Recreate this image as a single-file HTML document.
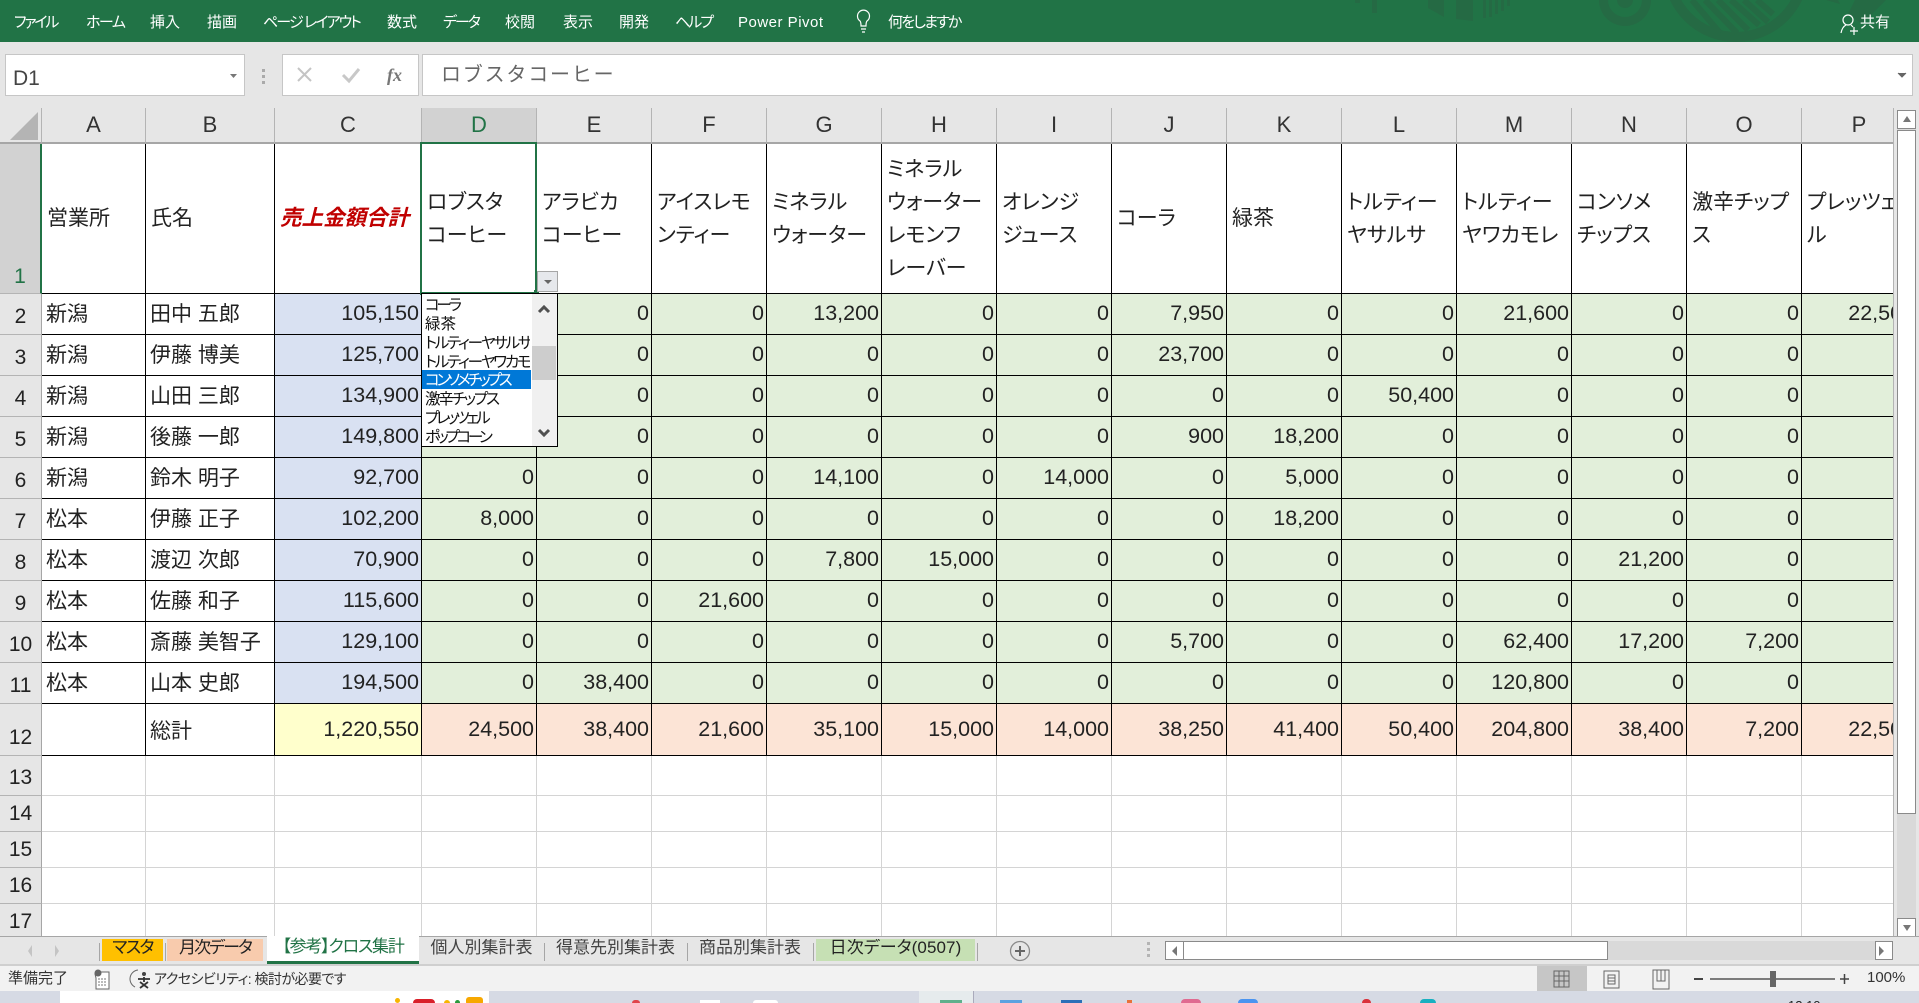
<!DOCTYPE html>
<html lang="ja"><head><meta charset="utf-8"><title>Excel</title>
<style>
html,body{margin:0;padding:0;width:1919px;height:1003px;overflow:hidden;background:#e6e6e6}
body{position:relative;font-family:"Liberation Sans","Noto Sans CJK JP",sans-serif;font-feature-settings:"palt";color:#111}
.a{position:absolute;white-space:nowrap}
#rib{position:absolute;left:0;top:0;width:1919px;height:42px;background:#217346;overflow:hidden}
#rib .l{position:absolute;top:13px;font-size:15px;line-height:20px;color:#fff;white-space:nowrap}
.box{position:absolute;background:#fff;border:1px solid #c6c6c6;box-sizing:border-box}
#sheet{position:absolute;left:0;top:108px;width:1893px;height:828px;overflow:hidden;background:#fff}
table{border-collapse:separate;border-spacing:0;table-layout:fixed;width:1917px}
td,th{box-sizing:border-box;padding:0;overflow:hidden;white-space:nowrap;font-weight:normal}
th{background:#e6e6e6;color:#222;font-size:21px}
tr.h th{border-right:1px solid #b4b4b4;border-bottom:2px solid #a6a6a6;font-size:22px;text-align:center;height:36px;color:#333;padding-top:0}
tr.h th.on{background:#d2d2d2;color:#217346}
th.n{border-right:1px solid #a6a6a6;border-bottom:1px solid #b4b4b4;text-align:center;vertical-align:bottom;line-height:30px;padding-bottom:2px}
td{font-size:21.5px;border-right:1px solid #000;border-bottom:1px solid #000;text-align:right;padding:0 2px 2px 0;background:#e2efda;color:#222}
td.t{background:#fff;text-align:left;padding:0 0 2px 4px;font-size:21px}
td.c{background:#d9e1f2}
td.y{background:#ffffcc;padding-bottom:0}
td.p{background:#fce4d6;padding-bottom:0}
td.t.z{padding-bottom:0}
tr.w td{background:#fff;text-align:left;padding:0 0 0 5px;font-size:21px;line-height:33px}
tr.e td{background:#fff;border-right:1px solid #d4d4d4;border-bottom:1px solid #d4d4d4}
.tab{position:absolute;top:939px;height:22px;line-height:18px;font-size:17px;text-align:center;color:#222;white-space:nowrap;overflow:hidden}
.sep{position:absolute;top:943px;width:1px;height:18px;background:#a6a6a6}
.dd{position:absolute;left:425px;width:105px;height:19px;line-height:19px;font-size:15.5px;color:#111;overflow:hidden;white-space:nowrap}
</style></head><body>

<div id="rib">
<svg width="1919" height="42" style="position:absolute;left:0;top:0" fill="#26694a">
<g fill="#256a44">
<rect x="1372" y="0" width="5" height="13"/><rect x="1355" y="0" width="5" height="3"/>
<path d="M1428 0h16v17l-16-9z"/><path d="M1456 0h17v21l-17-2z"/>
<rect x="1483" y="0" width="3" height="18"/><rect x="1489" y="0" width="3" height="17"/><rect x="1495" y="0" width="3" height="14"/><rect x="1501" y="0" width="3" height="11"/><rect x="1507" y="0" width="3" height="6"/>
<circle cx="1625" cy="0" r="26"/>
<circle cx="1736" cy="-31" r="73"/>
<path d="M1826 0h12l2 4zM1855 0h31l-24 24-14-10z"/>
</g>
<circle cx="1625" cy="0" r="17" fill="#217346"/><circle cx="1625" cy="0" r="8" fill="#256a44"/>
<circle cx="1736" cy="-31" r="63" fill="#217346"/>
<g stroke="#256a44" stroke-width="6" fill="none"><path d="M1692 0l28 33M1705 0l32 33M1718 0l30 30M1731 0l28 25M1744 0l24 22M1757 0l16 14"/></g>
<circle cx="1848" cy="20" r="5" fill="none" stroke="#fff" stroke-width="1.2"/>
<path d="M1841 33c1-5 3-7 5-8M1851 25l2 2M1854 27v8M1850 31h8" stroke="#fff" stroke-width="1.2" fill="none"/>
<path d="M860 21a6 6 0 1 1 7 0c-1 1-1 3-1 5h-5c0-2 0-4-1-5zM861 29h5M862 32h3" stroke="#fff" stroke-width="1.2" fill="none"/>
</svg>
<span class="l" style="left:14px;letter-spacing:-2.2px">ファイル</span>
<span class="l" style="left:86px;letter-spacing:-1.5px">ホーム</span>
<span class="l" style="left:150px">挿入</span>
<span class="l" style="left:207px">描画</span>
<span class="l" style="left:263px;letter-spacing:-1.9px">ページ レイアウト</span>
<span class="l" style="left:387px">数式</span>
<span class="l" style="left:443px;letter-spacing:-2px">データ</span>
<span class="l" style="left:505px">校閲</span>
<span class="l" style="left:563px">表示</span>
<span class="l" style="left:619px">開発</span>
<span class="l" style="left:675px;letter-spacing:-2px">ヘルプ</span>
<span class="l" style="left:738px;letter-spacing:.5px">Power Pivot</span>
<span class="l" style="left:888px;letter-spacing:-1.8px">何をしますか</span>
<span class="l" style="left:1860px">共有</span>
</div>

<div class="box" style="left:5px;top:54px;width:240px;height:42px"></div>
<div class="a" style="left:13px;top:65px;font-size:21px;line-height:28px;color:#444">D1</div>
<svg class="a" style="left:0;top:42px" width="440" height="66">
<path d="M230 32h7l-3.500 4z" fill="#777"/>
<rect x="262" y="27" width="3" height="3" fill="#aaa"/><rect x="262" y="33" width="3" height="3" fill="#aaa"/><rect x="262" y="39" width="3" height="3" fill="#aaa"/>
</svg>
<div class="box" style="left:282px;top:54px;width:137px;height:42px"></div>
<svg class="a" style="left:282px;top:54px" width="137" height="42">
<path d="M16 14l13 13M29 14l-13 13" stroke="#c4c4c4" stroke-width="2" fill="none"/>
<path d="M61 21l6 6 10-12" stroke="#c8c8c8" stroke-width="3" fill="none"/>
<text x="105" y="27" font-family="Liberation Serif" font-style="italic" font-weight="bold" font-size="18" fill="#777">fx</text>
</svg>
<div class="box" style="left:422px;top:54px;width:1491px;height:42px"></div>
<div class="a" style="left:441px;top:61px;font-size:20px;line-height:28px;color:#666;letter-spacing:1.8px;font-feature-settings:normal">ロブスタコーヒー</div>
<svg class="a" style="left:1896px;top:70px" width="12" height="10"><path d="M2 3l4 4 4-4" fill="#666" stroke="#666"/></svg>

<div id="sheet">
<table>
<colgroup><col style="width:42px"><col style="width:104px"><col style="width:129px"><col style="width:147px"><col span="13" style="width:115px"></colgroup>
<tr class="h"><th style="background:#e6e6e6;border-right:1px solid #b4b4b4"></th><th>A</th><th>B</th><th>C</th><th class="on">D</th><th>E</th><th>F</th><th>G</th><th>H</th><th>I</th><th>J</th><th>K</th><th>L</th><th>M</th><th>N</th><th>O</th><th>P</th></tr>
<tr class="w" style="height:150px"><th class="n" style="background:#d2d2d2;color:#217346;border-right:2px solid #217346;padding-bottom:1px">1</th>
<td style="font-size:21px;line-height:30px">営業所</td><td style="font-size:21px;line-height:30px">氏名</td>
<td style="color:#c00000;font-weight:bold;font-style:italic;font-size:21.500px">売上金額合計</td>
<td>ロブスタ<br>コーヒー</td><td>アラビカ<br>コーヒー</td><td>アイスレモ<br>ンティー</td><td>ミネラル<br>ウォーター</td><td>ミネラル<br>ウォーター<br>レモンフ<br>レーバー</td><td>オレンジ<br>ジュース</td><td>コーラ</td><td>緑茶</td><td>トルティー<br>ヤサルサ</td><td>トルティー<br>ヤワカモレ</td><td>コンソメ<br>チップス</td><td>激辛チップ<br>ス</td><td>プレッツェ<br>ル</td></tr>
<tr style="height:41px"><th class="n">2</th><td class="t">新潟</td><td class="t">田中 五郎</td><td class="c">105,150</td><td>2,400</td><td>0</td><td>0</td><td>13,200</td><td>0</td><td>0</td><td>7,950</td><td>0</td><td>0</td><td>21,600</td><td>0</td><td>0</td><td>22,500</td></tr>
<tr style="height:41px"><th class="n">3</th><td class="t">新潟</td><td class="t">伊藤 博美</td><td class="c">125,700</td><td>0</td><td>0</td><td>0</td><td>0</td><td>0</td><td>0</td><td>23,700</td><td>0</td><td>0</td><td>0</td><td>0</td><td>0</td><td>0</td></tr>
<tr style="height:41px"><th class="n">4</th><td class="t">新潟</td><td class="t">山田 三郎</td><td class="c">134,900</td><td>0</td><td>0</td><td>0</td><td>0</td><td>0</td><td>0</td><td>0</td><td>0</td><td>50,400</td><td>0</td><td>0</td><td>0</td><td>0</td></tr>
<tr style="height:41px"><th class="n">5</th><td class="t">新潟</td><td class="t">後藤 一郎</td><td class="c">149,800</td><td>0</td><td>0</td><td>0</td><td>0</td><td>0</td><td>0</td><td>900</td><td>18,200</td><td>0</td><td>0</td><td>0</td><td>0</td><td>0</td></tr>
<tr style="height:41px"><th class="n">6</th><td class="t">新潟</td><td class="t">鈴木 明子</td><td class="c">92,700</td><td>0</td><td>0</td><td>0</td><td>14,100</td><td>0</td><td>14,000</td><td>0</td><td>5,000</td><td>0</td><td>0</td><td>0</td><td>0</td><td>0</td></tr>
<tr style="height:41px"><th class="n">7</th><td class="t">松本</td><td class="t">伊藤 正子</td><td class="c">102,200</td><td>8,000</td><td>0</td><td>0</td><td>0</td><td>0</td><td>0</td><td>0</td><td>18,200</td><td>0</td><td>0</td><td>0</td><td>0</td><td>0</td></tr>
<tr style="height:41px"><th class="n">8</th><td class="t">松本</td><td class="t">渡辺 次郎</td><td class="c">70,900</td><td>0</td><td>0</td><td>0</td><td>7,800</td><td>15,000</td><td>0</td><td>0</td><td>0</td><td>0</td><td>0</td><td>21,200</td><td>0</td><td>0</td></tr>
<tr style="height:41px"><th class="n">9</th><td class="t">松本</td><td class="t">佐藤 和子</td><td class="c">115,600</td><td>0</td><td>0</td><td>21,600</td><td>0</td><td>0</td><td>0</td><td>0</td><td>0</td><td>0</td><td>0</td><td>0</td><td>0</td><td>0</td></tr>
<tr style="height:41px"><th class="n">10</th><td class="t">松本</td><td class="t">斎藤 美智子</td><td class="c">129,100</td><td>0</td><td>0</td><td>0</td><td>0</td><td>0</td><td>0</td><td>5,700</td><td>0</td><td>0</td><td>62,400</td><td>17,200</td><td>7,200</td><td>0</td></tr>
<tr style="height:41px"><th class="n">11</th><td class="t">松本</td><td class="t">山本 史郎</td><td class="c">194,500</td><td>0</td><td>38,400</td><td>0</td><td>0</td><td>0</td><td>0</td><td>0</td><td>0</td><td>0</td><td>120,800</td><td>0</td><td>0</td><td>0</td></tr>
<tr style="height:52px"><th class="n">12</th><td class="t z"></td><td class="t z">総計</td><td class="y">1,220,550</td><td class="p">24,500</td><td class="p">38,400</td><td class="p">21,600</td><td class="p">35,100</td><td class="p">15,000</td><td class="p">14,000</td><td class="p">38,250</td><td class="p">41,400</td><td class="p">50,400</td><td class="p">204,800</td><td class="p">38,400</td><td class="p">7,200</td><td class="p">22,500</td></tr>
<tr class="e" style="height:40px"><th class="n">13</th><td></td><td></td><td></td><td></td><td></td><td></td><td></td><td></td><td></td><td></td><td></td><td></td><td></td><td></td><td></td><td></td></tr>
<tr class="e" style="height:36px"><th class="n">14</th><td></td><td></td><td></td><td></td><td></td><td></td><td></td><td></td><td></td><td></td><td></td><td></td><td></td><td></td><td></td><td></td></tr>
<tr class="e" style="height:36px"><th class="n">15</th><td></td><td></td><td></td><td></td><td></td><td></td><td></td><td></td><td></td><td></td><td></td><td></td><td></td><td></td><td></td><td></td></tr>
<tr class="e" style="height:36px"><th class="n">16</th><td></td><td></td><td></td><td></td><td></td><td></td><td></td><td></td><td></td><td></td><td></td><td></td><td></td><td></td><td></td><td></td></tr>
<tr class="e" style="height:36px"><th class="n">17</th><td></td><td></td><td></td><td></td><td></td><td></td><td></td><td></td><td></td><td></td><td></td><td></td><td></td><td></td><td></td><td></td></tr>
</table>
</div>
<svg class="a" style="left:0;top:108px" width="41" height="35"><path d="M38 4v28H10z" fill="#b4b4b4"/></svg>
<div class="a" style="left:1893px;top:108px;width:1px;height:828px;background:#b4b4b4"></div>

<!-- selection -->
<div class="a" style="left:420px;top:142px;width:113px;height:148px;border:2px solid #217346;border-bottom-width:3px"></div>
<div class="a" style="left:534px;top:290px;width:5px;height:5px;background:#217346"></div>
<div class="a" style="left:537px;top:271px;width:21px;height:21px;box-sizing:border-box;border:1px solid #a6a6a6;background:#e6e8ec"></div>
<svg class="a" style="left:537px;top:271px" width="21" height="21"><path d="M7 9h8l-4 4z" fill="#666"/></svg>

<!-- dropdown -->
<div class="a" style="left:421px;top:293px;width:137px;height:154px;background:#fff;border:1px solid #000;box-sizing:border-box"></div>
<div class="a" style="left:532px;top:294px;width:25px;height:152px;background:#f0f0f0"></div>
<div class="a" style="left:532px;top:346px;width:24px;height:34px;background:#cdcdcd"></div>
<svg class="a" style="left:532px;top:294px" width="25" height="152"><path d="M7 18l5-5 5 5M7 136l5 5 5-5" stroke="#505050" stroke-width="3" fill="none"/></svg>
<div class="a" style="left:422px;top:370px;width:109px;height:19px;background:#0078d7"></div>
<div class="dd" style="top:296px;letter-spacing:-3.200px">コーラ</div>
<div class="dd" style="top:315px">緑茶</div>
<div class="dd" style="top:334px;letter-spacing:-2.200px">トルティーヤサルサ</div>
<div class="dd" style="top:353px;letter-spacing:-2.200px">トルティーヤワカモレ</div>
<div class="dd" style="top:371px;color:#fff;letter-spacing:-3.100px">コンソメチップス</div>
<div class="dd" style="top:390px;letter-spacing:-2.100px">激辛チップス</div>
<div class="dd" style="top:409px;letter-spacing:-3.200px">プレッツェル</div>
<div class="dd" style="top:428px;letter-spacing:-3.300px">ポップコーン</div>

<!-- v scrollbar -->
<div class="a" style="left:1897px;top:110px;width:19px;height:826px;background:#d9d9d9"></div>
<div class="box" style="left:1897px;top:110px;width:19px;height:19px;border-color:#8a8a8a"></div>
<div class="box" style="left:1897px;top:130px;width:19px;height:684px;border-color:#8a8a8a"></div>
<div class="box" style="left:1897px;top:918px;width:19px;height:19px;border-color:#8a8a8a"></div>
<svg class="a" style="left:1897px;top:110px" width="19" height="827"><path d="M6 12h8l-4-6zM6 815h8l-4 6z" fill="#777"/></svg>

<!-- tabs -->
<div class="a" style="left:0;top:936px;width:1919px;height:28px;background:#e6e6e6;border-top:1px solid #a6a6a6;box-sizing:border-box"></div>
<svg class="a" style="left:20px;top:944px" width="50" height="14"><path d="M12 1l-4 6 4 6zM35 1l4 6-4 6z" fill="#c4c4c4"/></svg>
<div class="sep" style="left:99px"></div>
<div class="tab" style="left:102px;width:61px;background:#ffc000;letter-spacing:-1.600px">マスタ</div>
<div class="sep" style="left:165px"></div>
<div class="tab" style="left:167px;width:96px;background:#f8cbad;letter-spacing:-1.900px">月次データ</div>
<div class="tab" style="left:267px;width:152px;top:936px;height:25px;line-height:21px;background:#fff;color:#217346;border-bottom:3px solid #217346;letter-spacing:-1.200px">【参考】クロス集計</div>
<div class="tab" style="left:421px;width:121px;color:#444">個人別集計表</div>
<div class="sep" style="left:544px"></div>
<div class="tab" style="left:546px;width:139px;color:#444">得意先別集計表</div>
<div class="sep" style="left:687px"></div>
<div class="tab" style="left:689px;width:122px;color:#444">商品別集計表</div>
<div class="sep" style="left:813px"></div>
<div class="tab" style="left:816px;width:159px;background:#c6e0b4;letter-spacing:.1px">日次データ(0507)</div>
<div class="sep" style="left:977px"></div>
<svg class="a" style="left:1000px;top:938px" width="160" height="24">
<circle cx="20" cy="13" r="9.500" fill="none" stroke="#8a8a8a" stroke-width="1.300"/><path d="M20 8v10M15 13h10" stroke="#666" stroke-width="2"/>
<rect x="147" y="4" width="3" height="3" fill="#b4b4b4"/><rect x="147" y="10" width="3" height="3" fill="#b4b4b4"/><rect x="147" y="16" width="3" height="3" fill="#b4b4b4"/>
</svg>
<div class="a" style="left:1165px;top:941px;width:728px;height:19px;background:#d9d9d9"></div>
<div class="box" style="left:1165px;top:941px;width:19px;height:19px;border-color:#8a8a8a"></div>
<div class="box" style="left:1183px;top:941px;width:425px;height:19px;border-color:#8a8a8a"></div>
<div class="box" style="left:1875px;top:941px;width:18px;height:19px;border-color:#8a8a8a"></div>
<svg class="a" style="left:1165px;top:941px" width="728" height="19"><path d="M12 5l-5 5 5 5zM714 5l5 5-5 5z" fill="#777"/></svg>

<!-- status -->
<div class="a" style="left:0;top:964px;width:1919px;height:27px;background:#f2f2f2;border-top:2px solid #cfcfcf;box-sizing:border-box"></div>
<div class="a" style="left:8px;top:969px;font-size:15px;line-height:20px;color:#333">準備完了</div>
<div class="a" style="left:154px;top:969px;font-size:14px;line-height:20px;color:#333;letter-spacing:-.55px">アクセシビリティ: 検討が必要です</div>
<svg class="a" style="left:90px;top:966px" width="70" height="25">
<path d="M5 8a3.500 3.500 0 0 1 6-2h8v17H6V12z" fill="#fff" stroke="#666"/><circle cx="8" cy="7" r="3.500" fill="#666"/>
<path d="M8 13h9M8 16h9M8 19h9" stroke="#777" stroke-dasharray="2 1"/>
<path d="M48 4a9 9 0 0 0-3 17" stroke="#666" fill="none"/>
<circle cx="54" cy="8" r="2" fill="#444"/><path d="M48 13h12M54 11v5M50 22l8-6M58 22l-8-6" stroke="#333" stroke-width="1.800"/>
</svg>
<div class="a" style="left:1537px;top:966px;width:50px;height:25px;background:#c6c6c6"></div>
<svg class="a" style="left:1537px;top:966px" width="330" height="25">
<path d="M17 5h15v16H17zM22 5v16M27 5v16M17 10h15M17 15h15" stroke="#666" fill="none"/>
<path d="M67 5h15v17H67zM71 9h7v9h-7zM71 12h7M71 15h7" stroke="#666" fill="none"/>
<path d="M116 4h16v19h-16zM120 4v11h8V4M124 4v11" stroke="#666" fill="none"/>
<path d="M157 13h9" stroke="#444" stroke-width="2"/>
<path d="M173 13h125" stroke="#555" stroke-width="1.500"/>
<rect x="233" y="5" width="6" height="16" fill="#666"/>
<path d="M303 13h9M307.500 8v10" stroke="#444" stroke-width="1.500"/>
</svg>
<div class="a" style="left:1867px;top:968px;font-size:15px;line-height:20px;color:#333">100%</div>

<!-- taskbar -->
<div class="a" style="left:0;top:991px;width:1919px;height:12px;background:#d6dae4;overflow:hidden">
<div class="a" style="left:60px;top:0;width:429px;height:12px;background:#fff"></div>
<div class="a" style="left:395px;top:7px;width:5px;height:5px;border-radius:3px;background:#f7b500"></div>
<div class="a" style="left:413px;top:8px;width:22px;height:8px;border-radius:6px;background:#d9202a"></div>
<div class="a" style="left:444px;top:9px;width:6px;height:6px;background:#f7b500;border-radius:3px"></div>
<div class="a" style="left:455px;top:9px;width:5px;height:5px;background:#2a9a3c;border-radius:3px"></div>
<div class="a" style="left:466px;top:6px;width:17px;height:8px;background:#f7a800;border-radius:3px"></div>
<div class="a" style="left:632px;top:9px;width:8px;height:6px;background:#e0444a;border-radius:3px"></div>
<div class="a" style="left:700px;top:9px;width:20px;height:6px;background:#fff"></div>
<div class="a" style="left:753px;top:9px;width:25px;height:6px;background:#fff;border-radius:3px"></div>
<div class="a" style="left:919px;top:0;width:54px;height:12px;background:#e6ebed;border-right:1px solid #aab"></div>
<div class="a" style="left:940px;top:9px;width:22px;height:5px;background:#5fb08c"></div>
<div class="a" style="left:1000px;top:9px;width:22px;height:5px;background:#5ba2e0"></div>
<div class="a" style="left:1061px;top:9px;width:21px;height:5px;background:#2b6fb8"></div>
<div class="a" style="left:1127px;top:9px;width:5px;height:5px;background:#e8703a"></div>
<div class="a" style="left:1181px;top:8px;width:20px;height:8px;background:#e06a90;border-radius:6px"></div>
<div class="a" style="left:1238px;top:8px;width:20px;height:8px;background:#4a94f0;border-radius:4px"></div>
<div class="a" style="left:1362px;top:8px;width:9px;height:8px;background:#d9303a;border-radius:4px"></div>
<div class="a" style="left:1420px;top:8px;width:16px;height:8px;background:#18b0c0;border-radius:8px"></div>
<div class="a" style="left:1788px;top:7px;font-size:13px;line-height:15px;color:#222">12:10</div>
</div>
</body></html>
